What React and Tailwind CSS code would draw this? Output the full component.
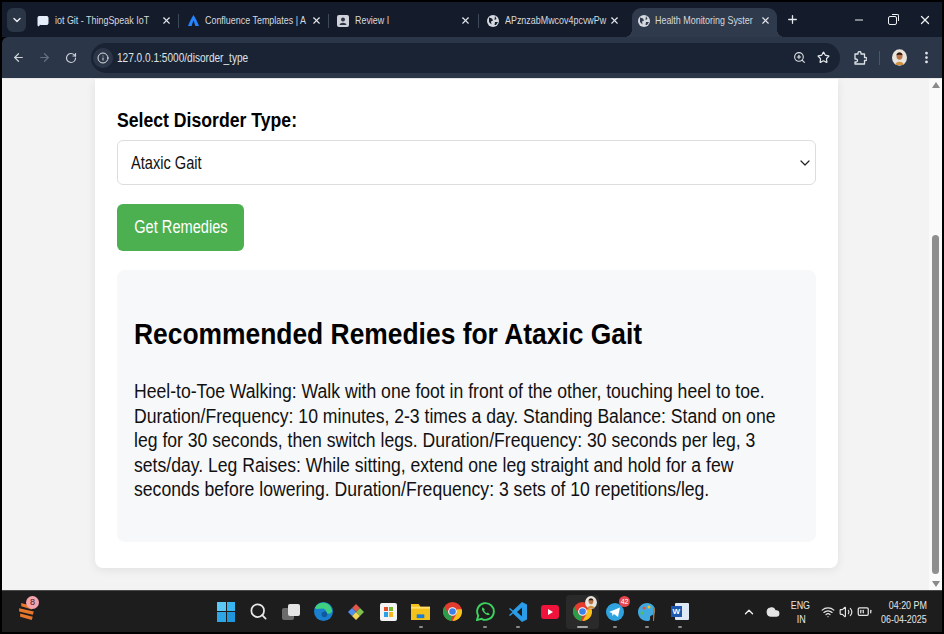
import { ChevronDown, X, Plus, Minus, ArrowLeft, ArrowRight, RotateCw, Info, ZoomIn, Star, EllipsisVertical, Globe, MessageSquare, ChevronUp, Wifi, Volume2, Cloud, BatteryMedium, Search } from 'lucide-react';

const Tab = ({ icon, title, width, textWidth, closeGap, active }) => (
    <div className={`relative flex items-center shrink-0 ${width} ${active ? 'h-[29px] pb-[4px] bg-[#2f3a4c] rounded-t-[9px]' : 'h-full'}`}>
        {active && <div className="absolute bottom-0 -left-[8px] w-[8px] h-[8px] bg-[radial-gradient(circle_at_0_0,transparent_8px,#2f3a4c_8px)]" />}
        {active && <div className="absolute bottom-0 -right-[8px] w-[8px] h-[8px] bg-[radial-gradient(circle_at_100%_0,transparent_8px,#2f3a4c_8px)]" />}
        <div className={`flex justify-center shrink-0 ${active ? 'w-[21px] pl-[2px]' : 'w-[24px] pl-[4px]'}`}>{icon}</div>
        <div className={`ml-[2px] whitespace-nowrap text-[10.500px] text-[#d5d9df] origin-left scale-x-[0.85] ${textWidth}`}>{title}</div>
        <div className="flex-1" />
        <X size={11} strokeWidth={2.4} className={`text-[#e4e7eb] shrink-0 ${closeGap}`} />
    </div>
);

const TabSep = () => <div className="w-px h-[14px] bg-[#3d4859] shrink-0" />;

const Logo = ({ children, dot, wide }) => (
    <div className={`relative w-[32.400px] h-full flex items-center justify-center shrink-0 ${wide ? 'bg-[#2a2a2a] rounded' : ''}`}>
        {children}
        {dot && <div className={`absolute bottom-[1px] h-[2px] rounded-full ${wide ? 'w-[11px] bg-[#a8a8a8]' : 'w-[4px] bg-[#8a8a8a]'}`} />}
    </div>
);

const Chrome = () => (
    <svg width="19" height="19" viewBox="0 0 20 20">
        <circle cx="10" cy="10" r="10" fill="#e33b2e" />
        <path d="M10 20A10 10 0 0 1 1.300 5L6 13l4 2-1 5z" fill="#2a9d4a" />
        <path d="M19.700 7.500A10 10 0 0 1 10 20l4-7 .5-5.500z" fill="#f6c21a" />
        <circle cx="10" cy="10" r="4.600" fill="#fff" />
        <circle cx="10" cy="10" r="3.500" fill="#3b82e8" />
    </svg>
);

const Avatar = ({ w, h }) => (
    <svg width={w} height={h} viewBox="0 0 20 22">
        <ellipse cx="10" cy="11" rx="10" ry="11" fill="#e9e4dc" />
        <ellipse cx="10" cy="9" rx="4" ry="5" fill="#b9744a" />
        <path d="M6 8c0-5 8-5 8 0-2-1-6-1-8 0z" fill="#2c1d14" />
        <path d="M4 21c1-6 11-6 12 0z" fill="#d0923f" />
    </svg>
);

const TrayText = ({ children, origin }) => (
    <span className={`text-[10.500px] leading-[14px] whitespace-nowrap scale-x-[0.85] ${origin}`}>{children}</span>
);

const Taskbar = () => (
    <div className="h-[42px] shrink-0 bg-[#1d1d1d] border-t border-[#4a4a4a] flex items-center text-[#e6e6e6]">
        <div className="relative w-[208px] pl-[16px] shrink-0">
            <svg width="18" height="21" viewBox="0 0 17 20">
                <path d="M3 2l11 3-1 3-10-3zM1 7l14 3-1 3-13-3zM2 12l12 3-1 3-11-3z" fill="#e8772e" />
            </svg>
            <div className="absolute left-[24px] -top-[5px] w-[13px] h-[13px] rounded-full bg-[#f5a3ad] text-[#3a1a1a] text-[9px] leading-[13px] text-center">8</div>
        </div>
        <div className="flex items-center h-[34px]">
            <Logo>
                <div className="grid grid-cols-2 gap-[1px] w-[18px] h-[20px]">
                    <div className="bg-[#5cc8f5]" /><div className="bg-[#38b4ee]" /><div className="bg-[#2ea6e6]" /><div className="bg-[#1f96dc]" />
                </div>
            </Logo>
            <Logo><Search size={19} strokeWidth={2.2} className="text-[#e8e8e8]" /></Logo>
            <Logo>
                <div className="relative w-[18px] h-[16px]">
                    <div className="absolute left-0 bottom-0 w-[12px] h-[12px] bg-[#6b6b6b] rounded-[2px]" />
                    <div className="absolute right-0 top-0 w-[12px] h-[12px] bg-[#e4e4e4] rounded-[2px]" />
                </div>
            </Logo>
            <Logo>
                <svg width="19" height="19" viewBox="0 0 20 20">
                    <circle cx="10" cy="10" r="10" fill="#1b7fd0" />
                    <path d="M1 6c3-7 16-8 18 3 0 3-3 4-6 3 1-4-3-6-6-5-3 0-5 1-6-1z" fill="#3fd07f" />
                    <circle cx="11" cy="13" r="3" fill="#0e5a9c" />
                </svg>
            </Logo>
            <Logo>
                <svg width="18" height="20" viewBox="0 0 18 20">
                    <path d="M5 6l4-4 4 4-4 4z" fill="#e2574c" />
                    <path d="M1 10l4-4 4 4-4 4z" fill="#4f8ff0" />
                    <path d="M9 10l4-4 4 4-4 4z" fill="#7fc04f" />
                    <path d="M5 14l4-4 4 4-4 4z" fill="#f1d45a" />
                </svg>
            </Logo>
            <Logo>
                <div className="w-[17px] h-[18px] bg-[#f4f4f4] rounded-[2px] grid grid-cols-2 gap-[1px] p-[4px]">
                    <div className="bg-[#e2512a]" /><div className="bg-[#7cb82f]" /><div className="bg-[#2aa0e8]" /><div className="bg-[#f6b81c]" />
                </div>
            </Logo>
            <Logo dot>
                <svg width="19" height="19" viewBox="0 0 20 20">
                    <path d="M0 2h8l2 3h10v14H0z" fill="#f5c21b" />
                    <path d="M0 5h20v2H0z" fill="#ffdf6b" />
                    <path d="M6 13h8v4H6z" fill="#1d7fd4" />
                </svg>
            </Logo>
            <Logo><Chrome /></Logo>
            <Logo dot>
                <svg width="19" height="19" viewBox="0 0 20 20">
                    <path d="M1 19l1.400-4.600A8.800 8.800 0 1 1 5.800 17.700z" fill="none" stroke="#3ed160" strokeWidth="2" />
                    <path d="M7 5.500c-2 2 .5 5 2 6.300 1.500 1.400 4 3 5.500 1l-2-1.800-1.200.8C10 11.200 9 10 8.500 9l.8-1.200z" fill="#3ed160" />
                </svg>
            </Logo>
            <Logo dot>
                <svg width="18" height="20" viewBox="0 0 18 20">
                    <path d="M13 0l5 2.400v15.200L13 20 4 11.500 1 14l-1-1 3.500-3L0 7l1-1 3 2.500z" fill="#2a9ce8" />
                    <path d="M13 5.500L8 10l5 4.500z" fill="#1d1d1d" />
                </svg>
            </Logo>
            <Logo>
                <div className="w-[18px] h-[14px] bg-[#f0143c] rounded-[3px] flex items-center justify-center">
                    <div className="w-0 h-0 border-y-[3px] border-y-transparent border-l-[5px] border-l-white" />
                </div>
            </Logo>
            <Logo dot wide>
                <Chrome />
                <div className="absolute top-[1px] right-[2px]"><Avatar w={12} h={13} /></div>
            </Logo>
            <Logo dot>
                <svg width="18" height="18" viewBox="0 0 18 18">
                    <circle cx="9" cy="9" r="9" fill="#2fa3e0" />
                    <path d="M3 9l11-4.500L12 14 8 11l-1.500 2-.5-3z" fill="#fff" />
                </svg>
                <div className="absolute top-[1px] right-[1px] w-[11px] h-[11px] rounded-full bg-[#e5484d] text-white text-[7px] leading-[11px] text-center">42</div>
            </Logo>
            <Logo dot>
                <svg width="18" height="20" viewBox="0 0 18 20">
                    <path d="M9 1c5 0 9 4 8 9-1 4-5 3-5 5s1 4-3 4C4 19 0 15 0 10S4 1 9 1z" fill="#3fa9e0" />
                    <circle cx="6" cy="6" r="1.500" fill="#e9503f" />
                    <circle cx="11" cy="5" r="1.500" fill="#f5c21b" />
                    <circle cx="4" cy="11" r="1.500" fill="#58c04f" />
                    <path d="M15 6l2 0-1 13h-1z" fill="#a8763e" />
                </svg>
            </Logo>
            <Logo dot>
                <div className="relative w-[18px] h-[17px]">
                    <div className="absolute right-0 top-0 w-[14px] h-[17px] bg-[#dfe8f5] rounded-[1px]" />
                    <div className="absolute left-0 top-[3px] w-[11px] h-[11px] bg-[#1c57b0] text-white text-[8px] leading-[11px] font-bold text-center">W</div>
                </div>
            </Logo>
        </div>
        <div className="flex items-center ml-[46px] h-full">
            <ChevronUp size={14} strokeWidth={2.4} className="text-[#f0f0f0]" />
            <Cloud size={14} fill="#e4e4e4" className="text-[#e4e4e4] ml-[10px]" />
            <div className="ml-[12px] w-[18px] flex flex-col items-center">
                <TrayText origin="origin-center">ENG</TrayText>
                <TrayText origin="origin-center">IN</TrayText>
            </div>
            <Wifi size={14} className="ml-[11px]" />
            <Volume2 size={14} className="ml-[4px]" />
            <BatteryMedium size={15} className="ml-[4px]" />
            <div className="ml-[7px] w-[48px] flex flex-col items-end">
                <TrayText origin="origin-right">04:20 PM</TrayText>
                <TrayText origin="origin-right">06-04-2025</TrayText>
            </div>
        </div>
    </div>
);

const App = () => (
    <div className="w-[944px] h-[634px] bg-black p-[2px] flex flex-col overflow-hidden font-['Liberation_Sans',Arial,sans-serif]">
        {/* tab strip */}
        <div className="h-[35px] shrink-0 bg-[#141c2c] flex items-end">
            <div className="w-[19px] h-[24px] ml-[5px] mb-[5px] bg-[#2a3546] rounded-md flex items-center justify-center shrink-0">
                <ChevronDown size={12} strokeWidth={3} className="text-[#e4e7eb]" />
            </div>
            <div className="flex items-center h-[29px] pb-[4px] ml-[3px]">
                <Tab width="w-[149px]" textWidth="w-[92px]" closeGap="mr-[6px]" title="iot Git - ThingSpeak IoT" icon={<MessageSquare size={12} fill="#e6eefa" className="text-[#e6eefa]" />} />
                <TabSep />
                <Tab width="w-[149px]" textWidth="w-[97px]" closeGap="mr-[6px]" title="Confluence Templates | A" icon={
                    <svg width="11" height="11" viewBox="0 0 12 12"><path d="M6 0c2 3 4 7 6 12H8C7 9 6.500 7 6 6c-.5 1-1 3-2 6H0C2 7 4 3 6 0z" fill="#2684ff" /></svg>
                } />
                <TabSep />
                <Tab width="w-[149px]" textWidth="w-[32px]" closeGap="mr-[7px]" title="Review I" icon={
                    <svg width="12" height="12" viewBox="0 0 12 12">
                        <rect width="12" height="12" rx="2" fill="#cfd3d9" />
                        <circle cx="6" cy="4.500" r="2" fill="#2a3546" />
                        <path d="M2.500 10c.5-3 6.500-3 7 0z" fill="#2a3546" />
                    </svg>
                } />
                <TabSep />
                <Tab width="w-[153px]" textWidth="w-[97px]" closeGap="mr-[12px]" title="APznzabMwcov4pcvwPw" icon={
                    <svg width="12" height="12" viewBox="0 0 12 12">
                        <circle cx="6" cy="6" r="6" fill="#d5d9df" />
                        <path d="M2 2.500l3 1 1 2-2 1 .5 3-2.500-2.500zM8 1l1.500 3-2 1zM8 7l3 0-2 3-1.500 0z" fill="#141c2c" />
                    </svg>
                } />
            </div>
            <Tab active width="w-[145px]" textWidth="w-[97px]" closeGap="mr-[6px]" title="Health Monitoring Syster" icon={
                <svg width="12" height="12" viewBox="0 0 12 12">
                    <circle cx="6" cy="6" r="6" fill="#d5d9df" />
                    <path d="M2 2.500l3 1 1 2-2 1 .5 3-2.500-2.500zM8 1l1.500 3-2 1zM8 7l3 0-2 3-1.500 0z" fill="#2f3a4c" />
                </svg>
            } />
            <Plus size={13} strokeWidth={2.4} className="text-[#e4e7eb] ml-[9px] mb-[11px] shrink-0" />
            <div className="flex-1" />
            <div className="flex items-center mb-[10px] text-[#eef0f3]">
                <Minus size={12} strokeWidth={2.4} />
                <div className="relative w-[9px] h-[9px] border-[1.500px] border-[#eef0f3] rounded-[2px] ml-[23px] mr-[1px]">
                    <div className="absolute -top-[3px] -right-[3px] w-[7px] h-[7px] border-t-[1.500px] border-r-[1.500px] border-[#eef0f3] rounded-tr-[2px]" />
                </div>
                <X size={14} strokeWidth={2.2} className="ml-[20px] mr-[10px]" />
            </div>
        </div>

        {/* toolbar */}
        <div className="h-[41px] shrink-0 bg-[#2b3648] rounded-tl-md flex items-center">
            <ArrowLeft size={13} strokeWidth={2.2} className="text-[#cdd2d9] ml-[10px]" />
            <ArrowRight size={13} strokeWidth={2.2} className="text-[#667083] ml-[13px]" />
            <RotateCw size={12} strokeWidth={2.4} className="text-[#cdd2d9] ml-[14px]" />
            <div className="w-[749px] h-[30px] bg-[#1a2334] rounded-full ml-[14px] flex items-center shrink-0">
                <div className="w-[20px] h-[20px] ml-[2px] rounded-full bg-[#2b3648] flex items-center justify-center">
                    <Info size={12} className="text-[#dde1e6]" />
                </div>
                <span className="ml-[4px] text-[12px] text-[#dfe3e8] origin-left scale-x-[0.84]">127.0.0.1:5000/disorder_type</span>
                <div className="flex-1" />
                <ZoomIn size={13} className="text-[#dfe3e8]" />
                <Star size={13} strokeWidth={2.2} className="text-[#e6e9ed] ml-[11px] mr-[10px]" />
            </div>
            {/* extensions icon, outline only */}
            <svg width="14" height="14" viewBox="0 0 14 14" fill="none" stroke="#dfe3e8" strokeWidth="1.300" strokeLinejoin="round" className="ml-[13px]">
                <path d="M2 3h3V2a1.500 1.500 0 0 1 3 0v1h3.500v3.500H12.500a1.500 1.500 0 0 1 0 3h-1V13H2v-2h1a1.500 1.500 0 0 0 0-3H2z" />
            </svg>
            <div className="w-px h-[14px] bg-[#4a5567] ml-[12px]" />
            <div className="ml-[12px] flex"><Avatar w={15} h={17} /></div>
            <EllipsisVertical size={15} strokeWidth={2.4} className="text-[#e6e9ed] ml-[12px]" />
        </div>

        {/* page */}
        <div className="flex-1 min-h-0 flex border-t border-[#e9e9e9]">
            <div className="flex-1 min-w-0 bg-[#f3f3f3] pl-[93px] pr-[91px]">
                <div className="bg-white rounded-b-lg shadow-[0_2px_10px_rgba(0,0,0,0.08)] h-[489px] px-[22px] pt-[29px] text-[#111]">
                    <div className="text-[20px] leading-[24px] font-bold text-black origin-left scale-x-[0.882] whitespace-nowrap">Select Disorder Type:</div>
                    <div className="mt-[8px] h-[45px] border border-[#dddddd] rounded-md flex items-center justify-between pl-[13px] pr-[2px] pt-[1px] text-[17.500px]">
                        <span className="origin-left scale-x-[0.835]">Ataxic Gait</span>
                        <ChevronDown size={16} strokeWidth={1.800} className="text-[#222]" />
                    </div>
                    <div className="mt-[19px] w-[127px] h-[47px] bg-[#4caf50] rounded-md flex items-center justify-center text-white text-[17.500px]">
                        <span className="scale-x-[0.835] whitespace-nowrap">Get Remedies</span>
                    </div>
                    <div className="mt-[19px] h-[272px] bg-[#f7f8fa] rounded-lg pl-[17px] pt-[44px] overflow-hidden">
                        <h2 className="text-[30px] leading-[40px] font-bold text-black origin-left scale-x-[0.88] whitespace-nowrap">Recommended Remedies for Ataxic Gait</h2>
                        <p className="mt-[25px] w-[745px] origin-left scale-x-[0.88] text-[20px] leading-[24.500px] text-[#111]">Heel-to-Toe Walking: Walk with one foot in front of the other, touching heel to toe. Duration/Frequency: 10 minutes, 2-3 times a day. Standing Balance: Stand on one leg for 30 seconds, then switch legs. Duration/Frequency: 30 seconds per leg, 3 sets/day. Leg Raises: While sitting, extend one leg straight and hold for a few seconds before lowering. Duration/Frequency: 3 sets of 10 repetitions/leg.</p>
                    </div>
                </div>
            </div>
            {/* scrollbar */}
            <div className="w-[13px] shrink-0 bg-[#fafafa] flex flex-col items-center pt-[3px] pb-[3px]">
                <div className="w-0 h-0 border-x-[4px] border-x-transparent border-b-[6px] border-b-[#8a8a8a]" />
                <div className="mt-[147px] flex-1 w-[7px] bg-[#8f8f8f] rounded-full" />
                <div className="mt-[7px] w-0 h-0 border-x-[4px] border-x-transparent border-t-[6px] border-t-[#8a8a8a]" />
            </div>
        </div>
        <Taskbar />
    </div>
);

export default App;
